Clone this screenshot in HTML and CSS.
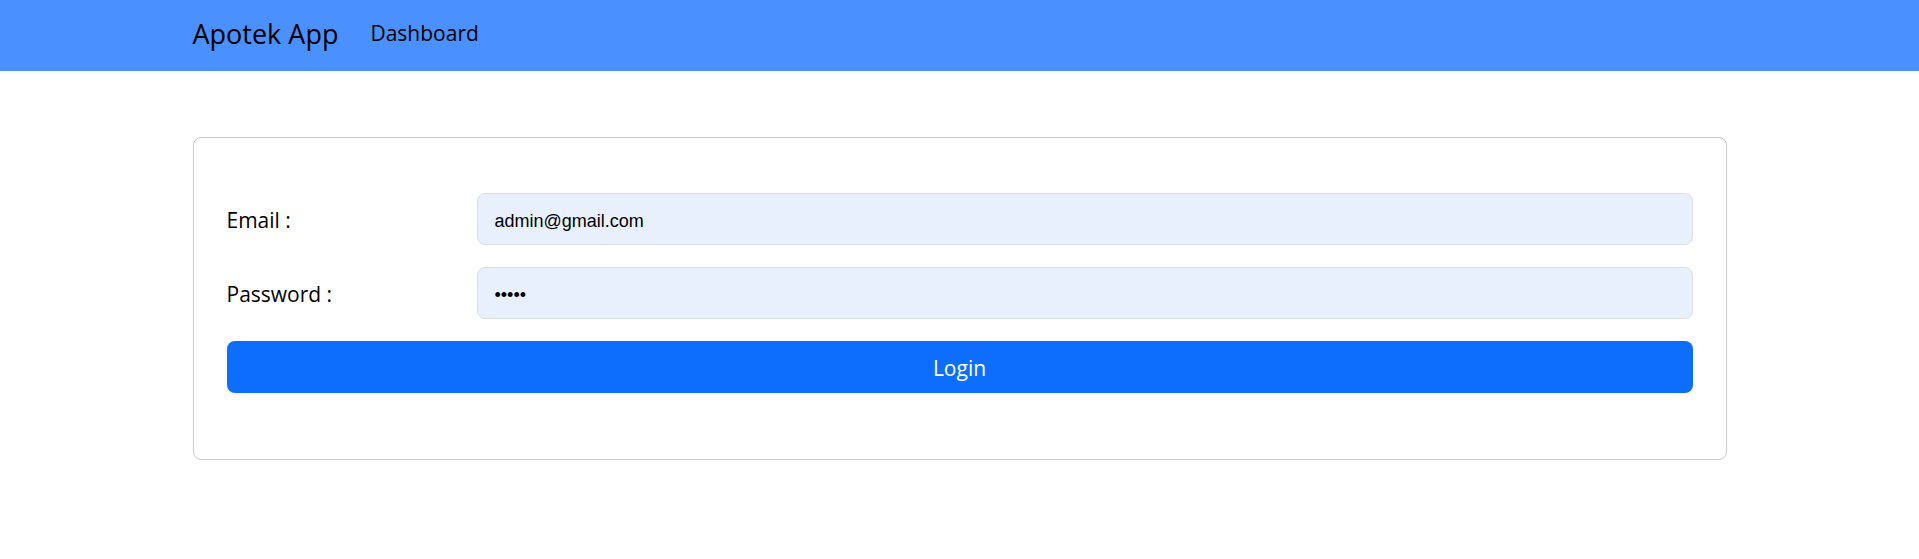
FILE: index.html
```html
<!DOCTYPE html>
<html lang="id">
<head>
  <meta charset="utf-8">
  <meta name="viewport" content="width=device-width, initial-scale=1">
  <title>Apotek App</title>
  <link rel="stylesheet" href="styles.css">
</head>
<body>
  <header class="navbar">
    <nav class="container navbar-inner">
      <a class="brand" href="#">Apotek App</a>
      <a class="nav-link" href="#">Dashboard</a>
    </nav>
  </header>
  <main class="container">
    <form class="card">
      <div class="row">
        <label class="label" for="email">Email :</label>
        <input class="field" type="email" id="email" name="email" value="admin@gmail.com">
      </div>
      <div class="row">
        <label class="label" for="password">Password :</label>
        <input class="field" type="password" id="password" name="password" value="admin">
      </div>
      <button class="submit" type="submit">Login</button>
    </form>
  </main>
</body>
</html>
```
FILE: styles.css
```css
* {
  box-sizing: border-box;
}

body {
  margin: 0;
  background: #fff;
  color: #000;
  font-family: "Segoe UI", "Open Sans", sans-serif;
  font-size: 21px;
  line-height: 34px;
}

.container {
  max-width: 1582px;
  margin: 0 auto;
  padding: 0 24px;
}

.navbar {
  background: #4a91ff;
}

.navbar-inner {
  display: flex;
  align-items: flex-start;
  gap: 32px;
  padding-top: 16px;
  padding-bottom: 20px;
}

.brand,
.nav-link {
  color: #000;
  text-decoration: none;
}

.brand {
  font-size: 27px;
  line-height: 35px;
}

.card {
  display: flex;
  flex-direction: column;
  gap: 22px;
  margin: 66px 0;
  padding: 55px 33px 66px;
  border: 1px solid #ccc;
  border-radius: 8px;
}

.row {
  display: grid;
  grid-template-columns: 250px 1fr;
  align-items: center;
}

.label {
  padding-top: 2px;
}

.field {
  width: 100%;
  height: 52px;
  padding: 11px 17px 7px;
  border: 1px solid #d9dfe6;
  border-radius: 8px;
  background: #e8f0fe;
  color: #000;
  font-family: "Liberation Sans", Arial, sans-serif;
  font-size: 18px;
}

.submit {
  padding: 10px 16px 8px;
  border: 0;
  border-radius: 8px;
  background: #0d6efd;
  color: #fff;
  font: inherit;
  cursor: pointer;
}
```
